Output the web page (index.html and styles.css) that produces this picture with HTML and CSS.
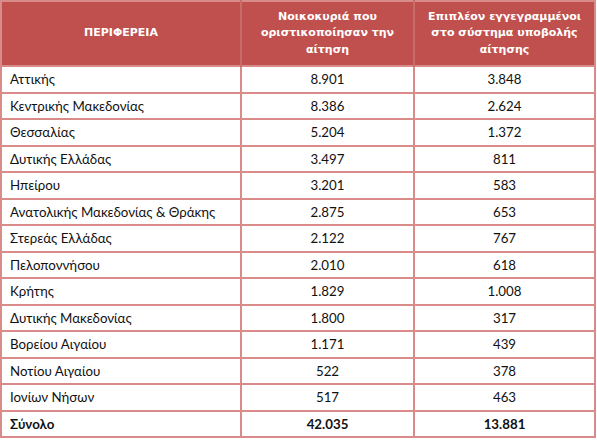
FILE: index.html
```html
<!DOCTYPE html>
<html lang="el">
<head>
    <meta charset="UTF-8">
    <title>Περιφέρειες</title>
    <link rel="stylesheet" href="styles.css">
</head>
<body>
    <table class="region-table">
        <colgroup>
            <col class="col-name">
            <col class="col-num">
            <col class="col-num2">
        </colgroup>
        <thead>
            <tr>
                <th>ΠΕΡΙΦΕΡΕΙΑ</th>
                <th>Νοικοκυριά που οριστικοποίησαν την αίτηση</th>
                <th>Επιπλέον εγγεγραμμένοι στο σύστημα υποβολής αίτησης</th>
            </tr>
        </thead>
        <tbody>
            <tr><td>Αττικής</td><td>8.901</td><td>3.848</td></tr>
            <tr><td>Κεντρικής Μακεδονίας</td><td>8.386</td><td>2.624</td></tr>
            <tr><td>Θεσσαλίας</td><td>5.204</td><td>1.372</td></tr>
            <tr><td>Δυτικής Ελλάδας</td><td>3.497</td><td>811</td></tr>
            <tr><td>Ηπείρου</td><td>3.201</td><td>583</td></tr>
            <tr><td>Ανατολικής Μακεδονίας &amp; Θράκης</td><td>2.875</td><td>653</td></tr>
            <tr><td>Στερεάς Ελλάδας</td><td>2.122</td><td>767</td></tr>
            <tr><td>Πελοποννήσου</td><td>2.010</td><td>618</td></tr>
            <tr><td>Κρήτης</td><td>1.829</td><td>1.008</td></tr>
            <tr><td>Δυτικής Μακεδονίας</td><td>1.800</td><td>317</td></tr>
            <tr><td>Βορείου Αιγαίου</td><td>1.171</td><td>439</td></tr>
            <tr><td>Νοτίου Αιγαίου</td><td>522</td><td>378</td></tr>
            <tr><td>Ιονίων Νήσων</td><td>517</td><td>463</td></tr>
            <tr class="total-row"><td>Σύνολο</td><td>42.035</td><td>13.881</td></tr>
        </tbody>
    </table>
</body>
</html>
```

FILE: styles.css
```css
:root {
    --accent: #c0504d;
    --line: #d98b8a;
    --text: #111;
}

body {
    margin: 0;
    padding: 0;
    background: white;
    font-family: 'Lato', 'Liberation Sans', sans-serif;
    color: var(--text);
}

.region-table {
    border-collapse: collapse;
    width: 596px;
    table-layout: fixed;
    border: 2px solid var(--line);
}

.col-name {
    width: 240px;
}

.col-num {
    width: 173px;
}

.region-table thead tr {
    height: 65px;
}

.region-table th {
    background: var(--accent);
    color: white;
    font-family: 'DejaVu Sans', 'Liberation Sans', sans-serif;
    font-size: 11px;
    font-weight: bold;
    line-height: 16.5px;
    padding: 0 12px;
    text-align: center;
    vertical-align: middle;
    border-left: 2px solid #c96b69;
}

.region-table th:first-child {
    border-left: none;
}

.region-table tbody tr {
    height: 26px;
}

.region-table tbody tr:nth-child(odd) {
    height: 27px;
}

.region-table td {
    padding: 0 8px;
    font-size: 13.3px;
    line-height: 15px;
    text-align: center;
    border: 2px solid var(--line);
}

.region-table td:first-child {
    text-align: left;
}

.total-row td {
    font-weight: bold;
}
```
